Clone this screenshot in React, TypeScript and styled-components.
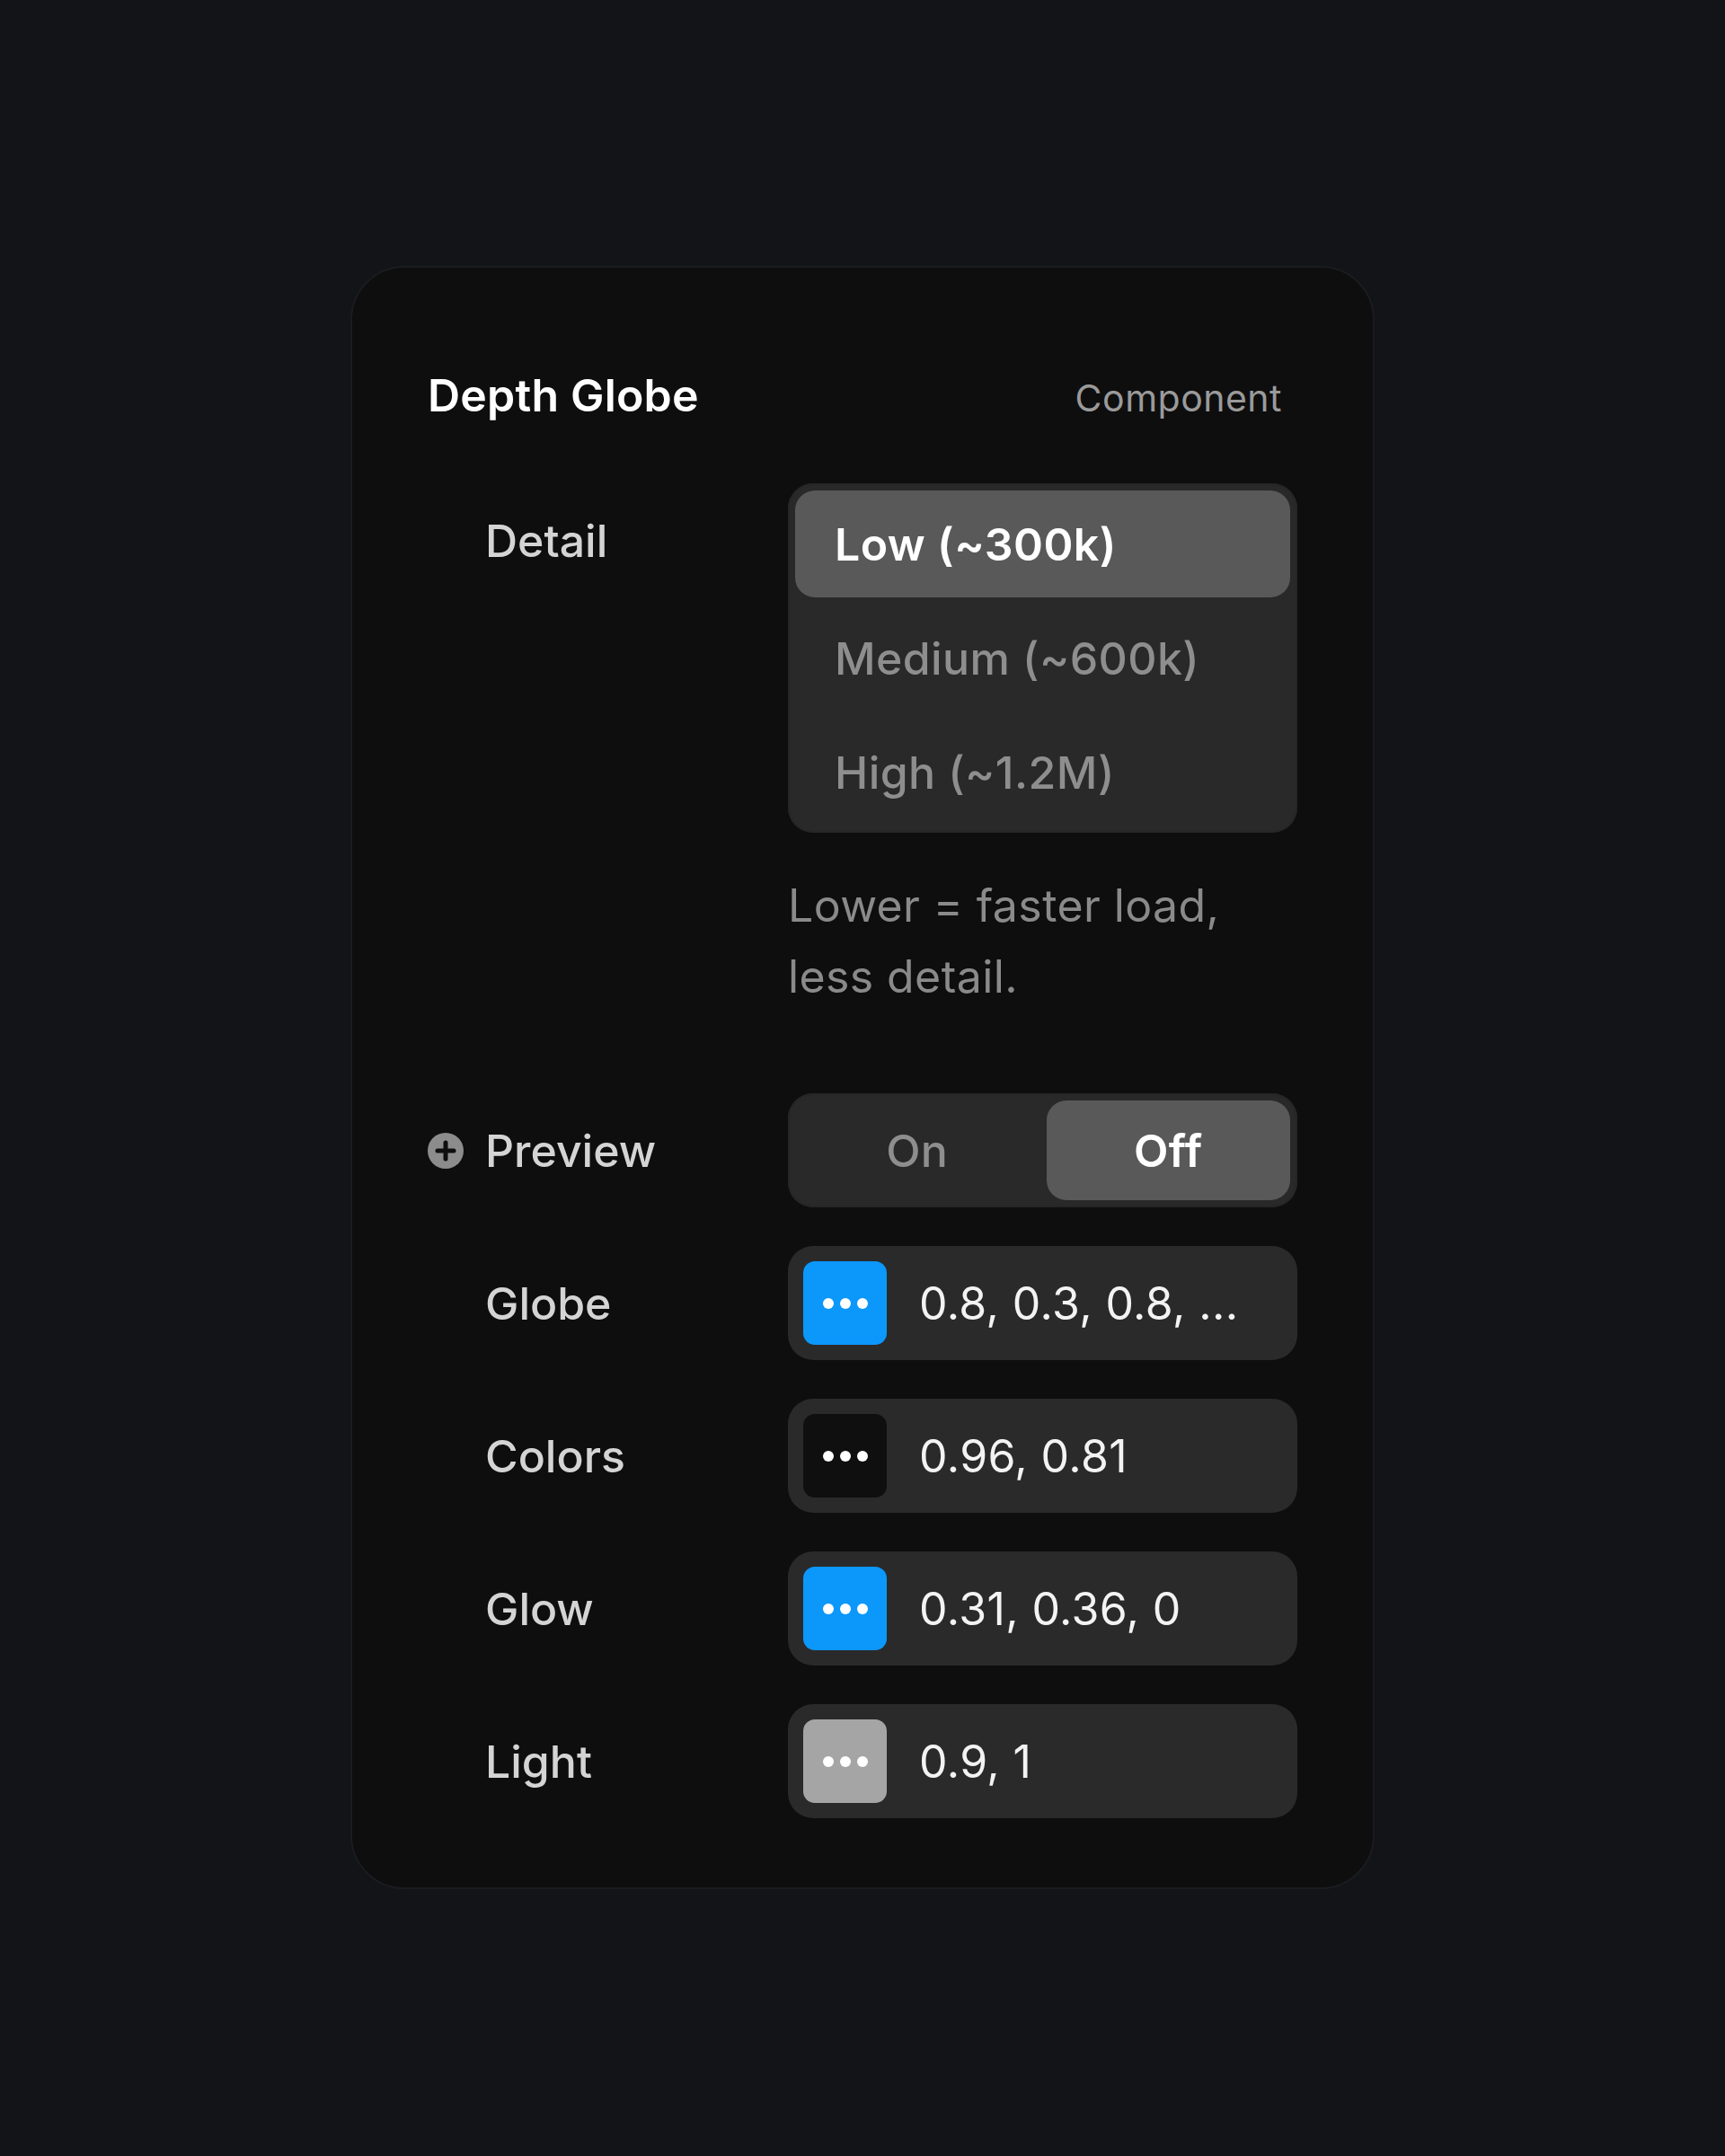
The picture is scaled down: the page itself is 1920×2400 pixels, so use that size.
import React from 'react'
import styled, { createGlobalStyle } from 'styled-components'

const GlobalStyle = createGlobalStyle`
  html, body {
    margin: 0;
    padding: 0;
    background: #131417;
  }
  body {
    font-family: Inter, "Noto Sans", sans-serif;
    -webkit-font-smoothing: antialiased;
  }
`

const Page = styled.div`
  min-height: 2400px;
  display: flex;
  justify-content: center;
  align-items: flex-start;
  padding-top: 296px;
  box-sizing: border-box;
`

const Card = styled.section`
  width: 1140px;
  height: 1807px;
  box-sizing: border-box;
  padding: 107px 84px 0 84px;
  background: #0e0e0f;
  border: 2px solid #1b1c1f;
  border-radius: 60px;
`

const Header = styled.header`
  display: flex;
  align-items: baseline;
  justify-content: space-between;
  padding-right: 17px;
  margin-bottom: 60px;
`

const Title = styled.h1`
  margin: 0;
  font-size: 50px;
  line-height: 70px;
  font-weight: 600;
  color: #ffffff;
  letter-spacing: 0.2px;
`

const Kind = styled.span`
  font-size: 41px;
  line-height: 70px;
  font-weight: 400;
  color: #9a9a9a;
  letter-spacing: 0.5px;
`

const Rows = styled.div`
  display: flex;
  flex-direction: column;
`

const Row = styled.div<{ $gap?: number }>`
  display: grid;
  grid-template-columns: 401px 567px;
  align-items: start;
  margin-bottom: ${(p) => p.$gap ?? 43}px;
`

const Label = styled.div`
  display: flex;
  align-items: center;
  gap: 24px;
  height: 127px;
  padding-left: 64px;
  font-size: 50px;
  font-weight: 500;
  color: #d4d4d4;
`

const IconLabel = styled(Label)`
  padding-left: 0;
`

const PlusIcon = styled.svg`
  width: 40px;
  height: 40px;
  flex: none;
`

const Control = styled.div`
  display: flex;
  flex-direction: column;
`

const Segmented = styled.div<{ $vertical?: boolean }>`
  display: flex;
  flex-direction: ${(p) => (p.$vertical ? 'column' : 'row')};
  gap: 8px;
  padding: 8px;
  background: #292929;
  border-radius: 28px;
  box-shadow: inset 0 0 0 2px #262626;
`

const Option = styled.div<{ $active?: boolean; $center?: boolean }>`
  flex: ${(p) => (p.$center ? '1 1 0' : 'none')};
  height: ${(p) => (p.$center ? 111 : 119)}px;
  display: flex;
  align-items: center;
  justify-content: ${(p) => (p.$center ? 'center' : 'flex-start')};
  padding-left: ${(p) => (p.$center ? 0 : 44)}px;
  border-radius: 22px;
  font-size: 50px;
  letter-spacing: 0.4px;
  font-weight: ${(p) => (p.$active ? 600 : 500)};
  color: ${(p) => (p.$active ? '#ffffff' : '#8e8e8e')};
  background: ${(p) => (p.$active ? '#595959' : 'transparent')};
`

const Help = styled.p`
  margin: 42px 0 0 0;
  font-size: 50px;
  letter-spacing: 0.4px;
  line-height: 79px;
  color: #8a8a8a;
`

const Field = styled.div`
  display: flex;
  align-items: center;
  gap: 36px;
  height: 127px;
  padding: 0 17px;
  box-sizing: border-box;
  background: #2a2a2a;
  border-radius: 28px;
`

const Swatch = styled.div<{ $color: string }>`
  width: 93px;
  height: 93px;
  flex: none;
  display: flex;
  align-items: center;
  justify-content: center;
  gap: 7px;
  border-radius: 13px;
  background: ${(p) => p.$color};
`

const Dot = styled.span`
  width: 12px;
  height: 12px;
  border-radius: 50%;
  background: #ffffff;
`

const Value = styled.span`
  font-size: 50px;
  letter-spacing: 0.4px;
  font-weight: 400;
  color: #f3f3f3;
  white-space: nowrap;
`

const colorRows = [
  { label: 'Globe', color: '#0c97fb', value: '0.8, 0.3, 0.8, ...' },
  { label: 'Colors', color: '#0f0f0f', value: '0.96, 0.81' },
  { label: 'Glow', color: '#0c97fb', value: '0.31, 0.36, 0' },
  { label: 'Light', color: '#a5a5a5', value: '0.9, 1' },
]

const detailOptions = ['Low (~300k)', 'Medium (~600k)', 'High (~1.2M)']

const App: React.FC = () => {
  return (
    <Page>
      <GlobalStyle />
      <Card>
        <Header>
          <Title>Depth Globe</Title>
          <Kind>Component</Kind>
        </Header>
        <Rows>
          <Row $gap={90}>
            <Label>Detail</Label>
            <Control>
              <Segmented $vertical>
                {detailOptions.map((o, i) => (
                  <Option key={o} $active={i === 0}>
                    {o}
                  </Option>
                ))}
              </Segmented>
              <Help>
                Lower = faster load,
                <br />
                less detail.
              </Help>
            </Control>
          </Row>
          <Row>
            <IconLabel>
              <PlusIcon viewBox="0 0 40 40">
                <circle cx="20" cy="20" r="20" fill="#8c8c8c" />
                <path d="M20 11v18M11 20h18" stroke="#0e0e0f" strokeWidth="5" strokeLinecap="round" />
              </PlusIcon>
              Preview
            </IconLabel>
            <Segmented>
              <Option $center>On</Option>
              <Option $center $active>
                Off
              </Option>
            </Segmented>
          </Row>
          {colorRows.map((r) => (
            <Row key={r.label}>
              <Label>{r.label}</Label>
              <Field>
                <Swatch $color={r.color}>
                  <Dot />
                  <Dot />
                  <Dot />
                </Swatch>
                <Value>{r.value}</Value>
              </Field>
            </Row>
          ))}
        </Rows>
      </Card>
    </Page>
  )
}

export default App
